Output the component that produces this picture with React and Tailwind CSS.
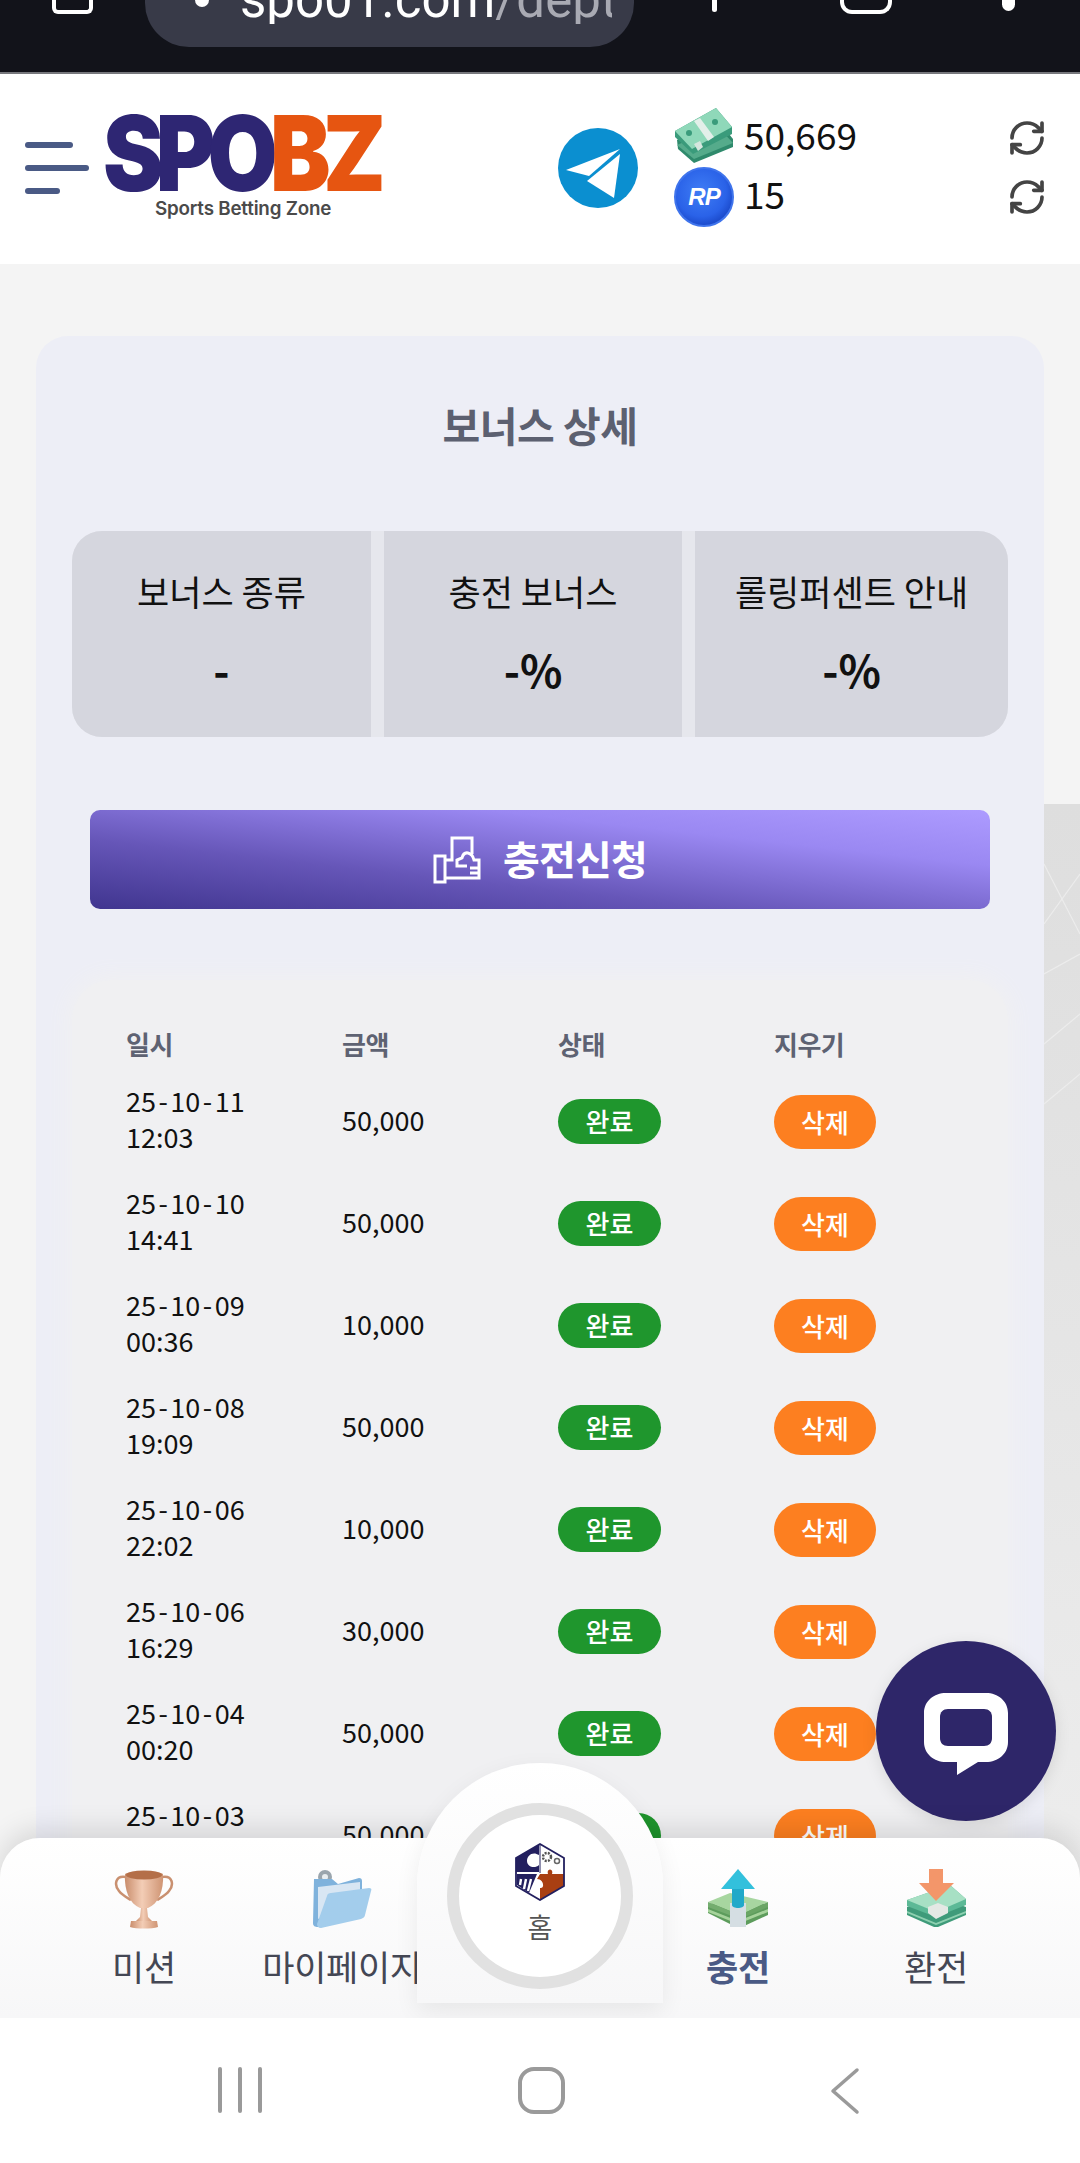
import React from "react";
import { RefreshCw } from "lucide-react";

const ko = { fontFamily: '"Noto Sans CJK KR", "Noto Sans", sans-serif' };

const rows = [
  ["25-10-11", "12:03", "50,000"],
  ["25-10-10", "14:41", "50,000"],
  ["25-10-09", "00:36", "10,000"],
  ["25-10-08", "19:09", "50,000"],
  ["25-10-06", "22:02", "10,000"],
  ["25-10-06", "16:29", "30,000"],
  ["25-10-04", "00:20", "50,000"],
  ["25-10-03", "18:47", "50,000"],
];

function Telegram() {
  return (
    <svg width="80" height="80" viewBox="0 0 80 80" className="shrink-0">
      <circle cx="40" cy="40" r="40" fill="#0b8fd0" />
      <path d="M8 42 L62 21 L31 48 Z" fill="#fff" />
      <path d="M29 53 L62 26 L56 70 Z" fill="#fff" />
    </svg>
  );
}

function Cash() {
  return (
    <svg width="60" height="56" viewBox="0 0 60 56" className="shrink-0">
      <path d="M3 33 L43 12 L59 32 L59 40 L20 56 L4 42 Z" fill="#2f8a6c" />
      <path d="M3 38 L44 20 L59 36 L20 52 Z" fill="#55ab8b" />
      <path d="M1 24 L42 1 L58 20 L58 27 L19 47 L1 30 Z" fill="#3a9b7b" />
      <path d="M1 24 L42 1 L58 20 L18 42 Z" fill="#8fd8b9" />
      <circle cx="15" cy="26" r="3" fill="#3a9b7b" />
      <circle cx="41" cy="15" r="3" fill="#3a9b7b" />
      <path d="M20 14 L26 11 L40 30 L34 34 Z" fill="#e3efe9" />
      <path d="M20 37 L26 34 L29 40 L24 44 Z" fill="#d5e6de" />
    </svg>
  );
}

function Coin() {
  return (
    <div className="w-[60px] h-[60px] rounded-full shrink-0 flex items-center justify-center bg-[radial-gradient(circle_at_45%_40%,#3f7df5_0%,#2a62e8_55%,#1744c4_80%,#4d86f5_100%)] border-2 border-[#3f74ec]">
      <span className="text-white italic font-bold text-[24px] tracking-[-1px] leading-none" style={{ fontFamily: '"Liberation Sans", sans-serif' }}>RP</span>
    </div>
  );
}

function Trophy() {
  return (
    <svg width="60" height="60" viewBox="0 0 60 60">
      <defs>
        <linearGradient id="tr" x1="0" x2="1"><stop offset="0" stopColor="#c98d6c" /><stop offset="0.45" stopColor="#f3cdb6" /><stop offset="1" stopColor="#cf9473" /></linearGradient>
      </defs>
      <path d="M12 8 C1 6 0 16 5 22 C8 26 12 28 17 31" fill="none" stroke="#c99070" strokeWidth="2.5" />
      <path d="M48 8 C59 6 60 16 55 22 C52 26 48 28 43 31" fill="none" stroke="#c99070" strokeWidth="2.5" />
      <path d="M11 5 C17 1 43 1 49 5 C50 22 44 35 34 39 L26 39 C16 35 10 22 11 5 Z" fill="url(#tr)" />
      <ellipse cx="30" cy="6" rx="18" ry="4.5" fill="#b46f48" />
      <path d="M27 39 L33 39 L34 48 L38 52 L22 52 L26 48 Z" fill="url(#tr)" />
      <path d="M17 52 L43 52 L44 58 C38 60 22 60 16 58 Z" fill="url(#tr)" />
    </svg>
  );
}

function Folder() {
  return (
    <svg width="60" height="60" viewBox="0 0 60 60">
      <circle cx="13" cy="8" r="7" fill="#9aa5ad" />
      <circle cx="13" cy="8" r="3" fill="#e8edf0" />
      <path d="M2 10 L20 10 L26 15 L47 9 C49 9 50 10 50 12 L50 22 L6 58 C3 58 1 57 1 54 Z" fill="#7fb2dc" />
      <path d="M6 18 L48 13 L48 30 L6 50 Z" fill="#d8e6f3" />
      <path d="M9 59 C6 59 5 57 5 55 L15 27 C15 25 17 24 19 24 L57 19 C59 19 60 20 59 22 L53 46 C53 48 51 49 49 50 Z" fill="#a3cdec" />
    </svg>
  );
}

function CashUp() {
  return (
    <svg width="60" height="60" viewBox="0 0 60 60">
      <path d="M0 36 L22 27 L60 36 L60 46 L34 58 L28 58 L0 44 Z" fill="#5d9c5c" />
      <path d="M0 40 L30 52 L60 40 L60 43 L30 55 L0 43 Z" fill="#a6d39b" />
      <path d="M0 33 L22 24 L60 33 L32 46 Z" fill="#a7d6a0" />
      <path d="M0 33 L32 46 L32 50 L0 38 Z" fill="#74ad6f" />
      <path d="M32 46 L60 33 L60 38 L32 50 Z" fill="#6aa565" />
      <path d="M22 34 L38 34 L38 58 L22 58 Z" fill="#d5dee3" />
      <path d="M24 20 L36 20 L36 36 C36 40 24 40 24 36 Z" fill="#21a9c9" />
      <path d="M30 0 L47 20 L13 20 Z" fill="#32c0dc" />
    </svg>
  );
}

function CashDown() {
  return (
    <svg width="60" height="60" viewBox="0 0 60 60">
      <path d="M1 38 L30 27 L60 38 L60 46 L32 58 L28 58 L1 46 Z" fill="#3f9b7a" />
      <path d="M1 42 L30 54 L60 42 L60 44 L30 56 L1 44 Z" fill="#8dd0b0" />
      <path d="M1 31 L44 16 L60 30 L60 36 L30 48 L1 37 Z" fill="#5cb996" />
      <path d="M1 31 L44 16 L60 30 L30 43 Z" fill="#a7e0c4" />
      <path d="M22 38 L32 34 L42 38 L42 44 L30 50 L22 44 Z" fill="#e4e8e4" />
      <path d="M23 0 L37 0 L37 14 L48 14 L30 32 L13 14 L23 14 Z" fill="#f3966a" />
    </svg>
  );
}

function HomeHex() {
  return (
    <svg width="50" height="58" viewBox="0 0 50 58">
      <clipPath id="hx"><path d="M25 1 L49 15 L49 43 L25 57 L1 43 L1 15 Z" /></clipPath>
      <g clipPath="url(#hx)">
        <rect width="50" height="58" fill="#fff" />
        <path d="M0 0 L24 0 L24 12 C18 8 12 12 12 18 C12 24 20 26 24 22 L24 29 L0 29 Z" fill="#23205f" />
        <path d="M25 58 L25 45 C30 46 29 36 22 36 L25 31 L33 31 C31 25 39 25 37 31 L50 31 L50 58 Z" fill="#a93f12" />
        <path d="M2 31 L22 31 L14 50 L2 42 Z" fill="#23205f" />
        <path d="M6 36 L5 42 M11 36 L9 46 M16 36 L13 48" stroke="#fff" strokeWidth="2.4" />
        <circle cx="32" cy="14" r="4" fill="none" stroke="#555" strokeWidth="2.5" strokeDasharray="2 1.2" />
        <circle cx="42" cy="18" r="2.5" fill="none" stroke="#666" strokeWidth="1.5" />
      </g>
      <path d="M25 1 L49 15 L49 43 L25 57 L1 43 L1 15 Z" fill="none" stroke="#23205f" strokeWidth="1.8" />
      <path d="M25 1 L25 30" stroke="#23205f" strokeWidth="1" />
    </svg>
  );
}

function ChargeIcon() {
  return (
    <svg width="48" height="48" viewBox="0 0 48 48" fill="none" stroke="#fff" strokeWidth="3">
      <path d="M2 20 L12 20 L12 46 L2 46 Z" />
      <path d="M12 24 L19 24 L19 2 L39 2 L39 18" />
      <path d="M12 42 L46 42 L46 24 L41 24 C39 16 31 14 29 22 L24 24 L24 30 L34 30" />
      <path d="M37 32 L46 32 M37 37 L46 37" />
    </svg>
  );
}

function NavItem({ label, icon, active }) {
  return (
    <div className="w-[198px] flex flex-col items-center">
      <div className="h-[60px] flex items-center justify-center">{icon}</div>
      <span className={`mt-[13px] text-[35px] leading-[48px] whitespace-nowrap tracking-[-0.3px] ${active ? "font-bold text-[#4a5a85]" : "text-[#444754]"}`} style={ko}>{label}</span>
    </div>
  );
}

function DateText({ value }) {
  const [a, b, c] = value.split("-");
  return (
    <div>
      {a}<span className="mx-[2.5px]">-</span>{b}<span className="mx-[2.5px]">-</span>{c}
    </div>
  );
}

export default function App() {
  return (
    <div className="h-screen w-full overflow-hidden flex flex-col bg-white" style={ko}>
      {/* browser bar */}
      <div className="h-[74px] shrink-0 bg-[#12131a] border-b-2 border-[#77787d] flex items-start">
        <div className="ml-[52px] w-[41px] h-[14px] border-x-[4px] border-b-[4px] border-white rounded-b-[6px]" />
        <div className="ml-[52px] w-[489px] h-[47px] bg-[#383a48] rounded-b-[44px] flex overflow-hidden pl-[50px] pr-[22px]">
          <div className="w-[14px] h-[7px] mt-0 rounded-b-full bg-white shrink-0" />
          <div className="ml-[31px] h-[48px] -mt-[24px] text-[51px] leading-[48px] whitespace-nowrap overflow-hidden text-white" style={{ fontFamily: "Roboto, sans-serif" }}>
            spo01.com<span className="text-[#a9aab3]">/dept</span>
          </div>
        </div>
        <div className="ml-[78px] w-[5px] h-[12px] bg-white rounded-b" />
        <div className="ml-[123px] w-[52px] h-[14px] border-x-[4px] border-b-[4px] border-white rounded-b-[12px]" />
        <div className="ml-[110px] w-[13px] h-[11px] bg-white rounded-b-full" />
      </div>

      {/* site header */}
      <header className="h-[190px] shrink-0 bg-white flex items-start relative">
        <div className="ml-[25px] mt-[68px] w-[64px] flex flex-col gap-[17px] shrink-0">
          <div className="h-[6px] w-[48px] rounded-full bg-[#4a5a85]" />
          <div className="h-[6px] w-[64px] rounded-full bg-[#4a5a85]" />
          <div className="h-[6px] w-[35px] rounded-full bg-[#4a5a85]" />
        </div>
        <div className="ml-[14px] mt-[35px] w-[280px] shrink-0 flex flex-col items-start">
          <div className="h-[88px] leading-[88px] text-[104px] font-black whitespace-nowrap origin-left scale-x-[0.872] tracking-[-0.085em]" style={{ fontFamily: "Inter, sans-serif" }}>
            <span className="text-[#2e2673]">SPO</span><span className="text-[#e65511]">BZ</span>
          </div>
          <div className="ml-[52px] -mt-[1px] text-[18.8px] leading-[26px] font-semibold text-[#4a4a4a] tracking-[-0.2px] whitespace-nowrap" style={{ fontFamily: "Inter, sans-serif" }}>Sports Betting Zone</div>
        </div>
        <div className="ml-[175px] mt-[54px]"><Telegram /></div>
        <div className="ml-[36px] mt-[31px] flex flex-col w-[373px]">
          <div className="flex items-center h-[59px]">
            <Cash />
            <span className="ml-[10px] text-[37px] leading-none text-[#111]">50,669</span>
            <RefreshCw size={40} strokeWidth={2.2} className="ml-auto mt-[6px] text-[#444]" />
          </div>
          <div className="flex items-center h-[66px]">
            <Coin />
            <span className="ml-[10px] -mt-[8px] text-[37px] leading-none text-[#111]">15</span>
            <RefreshCw size={40} strokeWidth={2.2} className="ml-auto text-[#444]" />
          </div>
        </div>
      </header>

      {/* page body */}
      <main className="flex-1 relative overflow-hidden bg-[#f4f4f4] px-[36px] pt-[72px]">
        <div className="absolute right-0 top-[540px] bottom-0 w-[36px] bg-gradient-to-b from-[#dedede] via-[#e6e6e6] to-[#efefef] overflow-hidden">
          <svg width="36" height="500" viewBox="0 0 36 500" fill="none" stroke="#ececec" strokeWidth="1.2">
            <path d="M0 120 L36 70 M0 60 L36 130 M0 170 L36 150 M0 240 L36 210 M0 300 L36 270" />
          </svg>
        </div>
        <section className="relative bg-[#edeef6] rounded-[32px] h-[1800px] pt-[64px] px-[36px]">
          <h1 className="text-center text-[41px] leading-[48px] font-bold text-[#5c6070] tracking-[-0.5px]">보너스 상세</h1>
          <div className="mt-[83px] h-[206px] flex rounded-[30px] overflow-hidden bg-[#e6e7ed] gap-[13px]">
            {[["보너스 종류", "-", "w-[299px]"], ["충전 보너스", "-%", "w-[298px]"], ["롤링퍼센트 안내", "-%", "flex-1"]].map(([a, b, w]) => (
              <div key={a} className={`${w} bg-[#d5d6de] text-center pt-[36px]`}>
                <div className="text-[35px] leading-[48px] text-[#111] whitespace-nowrap">{a}</div>
                <div className="mt-[28px] text-[44px] leading-[52px] font-bold text-[#111]">{b}</div>
              </div>
            ))}
          </div>
          <button className="mx-[18px] mt-[73px] w-[900px] h-[99px] rounded-[10px] flex items-center justify-center gap-[22px] text-white text-[40px] font-bold bg-[linear-gradient(to_top_right,#40358f_0%,#6656b8_35%,#9a88f2_72%,#ad9bff_100%)]">
            <ChargeIcon />
            <span className="-mt-[4px] tracking-[-0.8px]">충전신청</span>
          </button>
          <div className="mt-[71px] bg-[#f0f0f2] rounded-[40px] shadow-[0_0_20px_6px_#f0f0f2] pl-[54px] pt-[37px] pb-[40px]">
            <div className="grid grid-cols-[216px_216px_216px_216px] h-[52px] items-center text-[26px] font-semibold text-[#5e6272] tracking-[-0.5px]">
              <span>일시</span><span>금액</span><span>상태</span><span>지우기</span>
            </div>
            {rows.map(([d, t, a], i) => (
              <div key={i} className="grid grid-cols-[216px_216px_216px_216px] h-[102px] items-center text-[#111] text-[27px]">
                <div className="leading-[36px] -mt-[3px]"><DateText value={d} /><div>{t}</div></div>
                <div className="leading-[36px]">{a}</div>
                <div className="mt-[2px]"><span className="inline-flex w-[103px] h-[45px] items-center justify-center rounded-full bg-[#1f962d] text-white text-[26px] font-medium leading-none">완료</span></div>
                <div className="mt-[3px]"><span className="inline-flex w-[102px] h-[54px] items-center justify-center rounded-full bg-[#fd7f20] text-white text-[26px] font-medium leading-none">삭제</span></div>
              </div>
            ))}
          </div>
        </section>

        {/* chat button */}
        <div className="absolute left-[876px] top-[1377px] w-[180px] h-[180px] rounded-full bg-[#2e2669] flex items-center justify-center shadow-[0_4px_16px_rgba(0,0,0,0.1)]">
          <svg width="88" height="92" viewBox="0 0 88 92" fill="none">
            <path d="M24 8 L64 8 C76 8 86 16 86 28 L86 57 C86 69 76 77 64 77 L56 77 L35 90 L35 77 L24 77 C12 77 2 69 2 57 L2 28 C2 16 12 8 24 8 Z" fill="#fff" />
            <path d="M26 24 L62 24 C67 24 70 27 70 32 L70 53 C70 58 67 61 62 61 L26 61 C21 61 18 58 18 53 L18 32 C18 27 21 24 26 24 Z" fill="#2e2669" />
          </svg>
        </div>

        {/* bottom navigation */}
        <nav className="absolute left-0 right-0 bottom-0 h-[180px] rounded-t-[40px] bg-gradient-to-b from-white to-[#f7f7f8] shadow-[0_-8px_28px_rgba(0,0,0,0.12)] px-[45px] pt-[31px] flex items-start">
          <NavItem label="미션" icon={<Trophy />} />
          <NavItem label="마이페이지" icon={<Folder />} />
          <div className="w-[198px]" />
          <NavItem label="충전" icon={<CashUp />} active />
          <NavItem label="환전" icon={<CashDown />} />
        </nav>
        <div className="absolute left-[417px] bottom-[15px] w-[246px] h-[240px] rounded-t-[123px] bg-gradient-to-b from-white to-[#f7f7f8] shadow-[0_8px_24px_rgba(0,0,0,0.07)] flex items-start justify-center pt-[40px]">
          <div className="w-[186px] h-[186px] rounded-full border-[12px] border-[#e1e1e1] flex flex-col items-center bg-white pt-[28px]">
            <HomeHex />
            <span className="mt-[8px] text-[27px] leading-[36px] text-[#555]">홈</span>
          </div>
        </div>
      </main>

      {/* android navigation */}
      <footer className="h-[145px] shrink-0 bg-white flex items-start pt-[49px]">
        <div className="ml-[218px] flex gap-[16px]">
          <div className="w-[4px] h-[46px] rounded bg-[#9a9a9a]" />
          <div className="w-[4px] h-[46px] rounded bg-[#9a9a9a]" />
          <div className="w-[4px] h-[46px] rounded bg-[#9a9a9a]" />
        </div>
        <div className="ml-[256px] w-[47px] h-[47px] rounded-[16px] border-[4px] border-[#9a9a9a]" />
        <svg className="ml-[264px]" width="32" height="48" viewBox="0 0 32 48" fill="none" stroke="#9a9a9a" strokeWidth="3.5" strokeLinecap="round" strokeLinejoin="round">
          <path d="M28 3 L4 24 L28 45" />
        </svg>
      </footer>
    </div>
  );
}
